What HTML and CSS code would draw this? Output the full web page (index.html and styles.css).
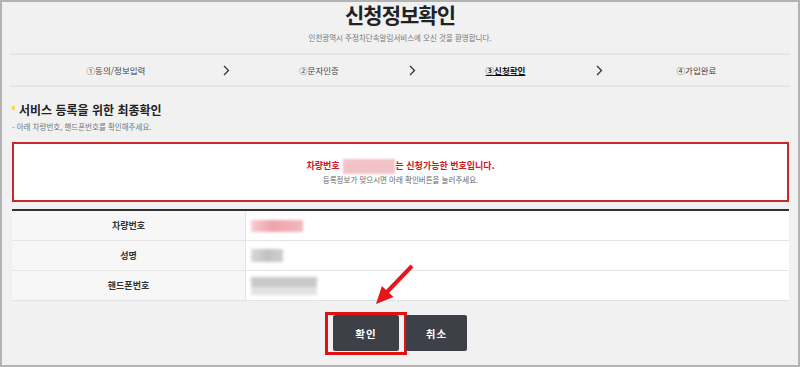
FILE: index.html
```html
<!DOCTYPE html>
<html lang="ko">
<head>
    <meta charset="UTF-8">
    <meta name="viewport" content="width=device-width, initial-scale=1.0">
    <title>신청정보확인</title>
    <link rel="stylesheet" href="styles.css">
</head>
<body>
    <div class="frame">
        <h1 class="title">신청정보확인</h1>
        <p class="subtitle">인천광역시 주정차단속알림서비스에 오신 것을 환영합니다.</p>

        <div class="steps">
            <span class="step">①동의/정보입력</span>
            <span class="chev"><svg width="7" height="11" viewBox="0 0 7 11"><polyline points="1,1 5.5,5.5 1,10" fill="none" stroke="#333" stroke-width="1.3"/></svg></span>
            <span class="step">②문자인증</span>
            <span class="chev"><svg width="7" height="11" viewBox="0 0 7 11"><polyline points="1,1 5.5,5.5 1,10" fill="none" stroke="#333" stroke-width="1.3"/></svg></span>
            <span class="step current">③신청확인</span>
            <span class="chev"><svg width="7" height="11" viewBox="0 0 7 11"><polyline points="1,1 5.5,5.5 1,10" fill="none" stroke="#333" stroke-width="1.3"/></svg></span>
            <span class="step">④가입완료</span>
        </div>

        <div class="section">
            <h2 class="section-title">서비스 등록을 위한 최종확인</h2>
            <p class="note">- 아래 차량번호, 핸드폰번호를 확인해주세요.</p>

            <div class="notice">
                <p class="notice-main">차량번호<span class="blur-plate"></span>는 신청가능한 번호입니다.</p>
                <p class="notice-sub">등록정보가 맞으시면 아래 확인버튼을 눌러주세요.</p>
            </div>

            <table class="info">
                <tr>
                    <th>차량번호</th>
                    <td><div class="blur blur-car"></div></td>
                </tr>
                <tr>
                    <th>성명</th>
                    <td><div class="blur blur-name"></div></td>
                </tr>
                <tr>
                    <th>핸드폰번호</th>
                    <td><div class="blur blur-phone"></div></td>
                </tr>
            </table>

            <div class="buttons">
                <button class="btn btn-ok">확인</button>
                <button class="btn btn-cancel">취소</button>
            </div>
        </div>

        <svg class="arrow" width="60" height="60" viewBox="0 0 60 60">
            <line x1="52" y1="11" x2="26" y2="38" stroke="#e8141b" stroke-width="4"/>
            <polygon points="16,49 21.9,31.1 33.5,42.1" fill="#e8141b"/>
        </svg>
    </div>
</body>
</html>
```

FILE: styles.css
```css
body {
    margin: 0;
    font-family: "Noto Sans CJK KR", "Noto Sans", sans-serif;
}
.frame {
    position: relative;
    width: 800px;
    height: 367px;
    box-sizing: border-box;
    border: 2px solid #b3b3b3;
    background-color: #f1f1f1;
    overflow: hidden;
}
.title {
    margin: 0;
    font-size: 21px;
    line-height: 24px;
    letter-spacing: -1px;
    text-align: center;
    color: #222;
}
.subtitle {
    margin: 6px 0 0;
    font-size: 7.5px;
    line-height: 12px;
    text-align: center;
    color: #777;
}
.steps {
    display: grid;
    grid-template-columns: 212px 8px 178px 8px 179px 8px 1fr;
    align-items: center;
    height: 30px;
    margin: 9px 8px 0;
    border-top: 2px solid #e6e6e6;
    border-bottom: 2px solid #e6e6e6;
}
.step {
    text-align: center;
    font-size: 8.5px;
    color: #444;
}
.step.current {
    font-weight: bold;
    color: #111;
    text-decoration: underline;
}
.chev {
    display: flex;
    justify-content: center;
}
.section {
    padding: 0 9px 0 10px;
}
.section-title {
    margin: 15px 0 0;
    font-size: 12px;
    line-height: 16px;
    color: #222;
}
.section-title::before {
    content: "";
    display: inline-block;
    width: 3px;
    height: 4px;
    margin: 4px 4px 0 0;
    vertical-align: top;
    background-color: #f7d45a;
}
.note {
    margin: 3px 0 0;
    font-size: 7.5px;
    line-height: 12px;
    color: #777;
}
.notice {
    display: flex;
    flex-direction: column;
    justify-content: center;
    height: 56px;
    margin-top: 9px;
    border: 2px solid #c8282e;
    background-color: #fff;
    text-align: center;
}
.notice p {
    margin: 0;
}
.notice-main {
    font-size: 9px;
    line-height: 13px;
    font-weight: bold;
    color: #d0161d;
}
.blur-plate {
    display: inline-block;
    width: 52px;
    height: 15px;
    margin: 0 1px 0 3px;
    vertical-align: middle;
    background-color: #f1c3c7;
    filter: blur(1px);
}
.notice-sub {
    font-size: 7.5px;
    line-height: 11px;
    color: #666;
}
.info {
    width: 100%;
    margin-top: 7px;
    border-collapse: collapse;
    border-top: 2px solid #333;
}
.info th, .info td {
    height: 29px;
    padding: 0;
    border-bottom: 1px solid #e4e4e4;
}
.info th {
    width: 233px;
    font-size: 9px;
    font-weight: bold;
    color: #333;
    background-color: #f7f7f7;
    border-right: 1px solid #e4e4e4;
}
.info td {
    padding-left: 5px;
    background-color: #fff;
}
.blur {
    filter: blur(1.5px);
}
.blur-car {
    width: 52px;
    height: 12px;
    background: linear-gradient(90deg, #f7cdd2, #eea3ac 40%, #f2b8bf);
}
.blur-name {
    width: 32px;
    height: 13px;
    background: linear-gradient(90deg, #d8d8d8, #c2c2c2 50%, #cfcfcf);
}
.blur-phone {
    width: 66px;
    height: 18px;
    background: linear-gradient(180deg, #c9c9c9 55%, #e2e2e2 55%);
}
.buttons {
    display: flex;
    justify-content: center;
    gap: 7px;
    margin-top: 14px;
    padding-right: 1px;
}
.btn {
    position: relative;
    height: 36px;
    border: none;
    border-radius: 2px;
    background-color: #3e4047;
    color: #fff;
    font-family: inherit;
    font-size: 10.5px;
    font-weight: bold;
    letter-spacing: 1px;
}
.btn-ok {
    width: 66px;
}
.btn-cancel {
    width: 61px;
}
.btn-ok::after {
    content: "";
    position: absolute;
    top: -3px;
    left: -8px;
    right: -8px;
    bottom: -4px;
    border: 3px solid #e40f0f;
}
.arrow {
    position: absolute;
    left: 358px;
    top: 253px;
}
```
